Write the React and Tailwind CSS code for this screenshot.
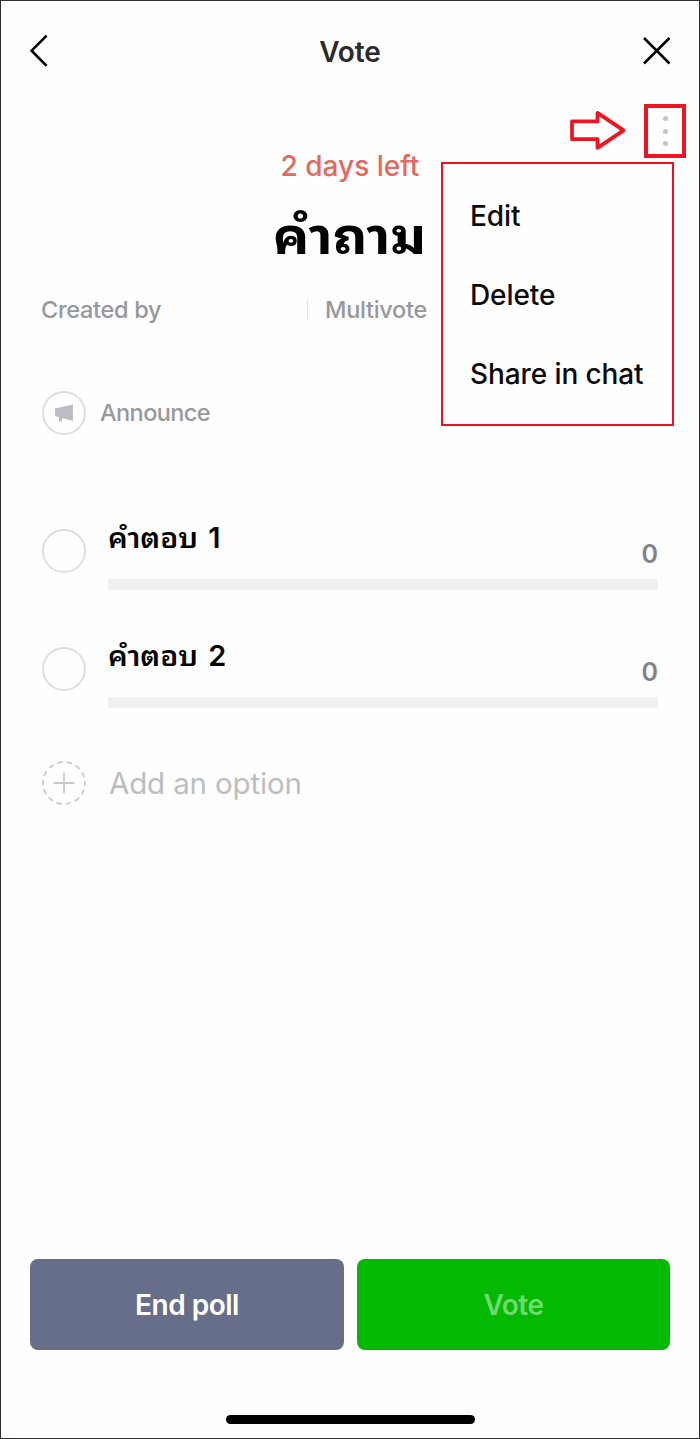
const options = [
  { label: "คำตอบ", number: 1, votes: 0 },
  { label: "คำตอบ", number: 2, votes: 0 },
];

const menuItems = ["Edit", "Delete", "Share in chat"];

function Header() {
  return (
    <header className="flex h-[100px] shrink-0 items-center justify-between px-[27px]">
      <button aria-label="Back" className="flex w-8">
        <svg width="24" height="36" viewBox="0 0 24 36" fill="none" stroke="#000" strokeWidth="2.6">
          <path d="M18.6 2.6 3.6 17.7 18.6 32.8" />
        </svg>
      </button>
      <h1 className="pt-px text-[28px] font-semibold leading-8 tracking-[-0.1px] text-[#2b2b2d]">Vote</h1>
      <button aria-label="Close" className="flex w-8 justify-end">
        <svg width="30" height="30" viewBox="0 0 30 30" fill="none" stroke="#000" strokeWidth="2.5">
          <path d="M2 2 27.5 27.5M27.5 2 2 27.5" />
        </svg>
      </button>
    </header>
  );
}

function ActionMenu() {
  return (
    <>
      <div className="absolute right-[13px] top-[103px] flex items-center gap-[17px]">
        <svg width="58" height="42" viewBox="0 0 58 42" fill="none" stroke="#ed1620" strokeWidth="3.8" strokeLinejoin="round">
          <path d="M3 11.4H28.5V2.8L54.6 20.3 28.5 37.8V29.2H3Z" />
        </svg>
        <button aria-label="More" className="flex h-[54px] w-[42px] flex-col items-center justify-center gap-[7.4px] border-4 border-[#ed1620]">
          <span className="size-[5px] rounded-full bg-[#c4c4c8]" />
          <span className="size-[5px] rounded-full bg-[#c4c4c8]" />
          <span className="size-[5px] rounded-full bg-[#c4c4c8]" />
        </button>
      </div>
      <ul className="absolute left-[440px] top-[161px] flex h-[264px] w-[233px] flex-col gap-[39px] border-2 border-[#ed1020] bg-[#fefefe] pl-[27px] pt-[32px] text-[28px] font-medium leading-10 tracking-[-0.1px] text-[#0a0a0a]">
        {menuItems.map((item) => (
          <li key={item} className="whitespace-nowrap">{item}</li>
        ))}
      </ul>
    </>
  );
}

function Option({ option }) {
  return (
    <li className="flex h-[118px]">
      <span className="mt-[11px] size-11 shrink-0 rounded-full border-2 border-[#dededf]" />
      <div className="ml-[22px] w-[550px]">
        <div className="flex h-[61px] justify-between">
          <p className="-mt-0.5 flex h-10 items-baseline gap-[16px] text-[29px] font-semibold leading-10 text-[#050505]">
            <span className="origin-left scale-x-[1.07] font-['Noto_Sans_Thai_Looped','Noto_Looped_Thai','Loma','Garuda','Waree',serif] text-[28px] font-semibold">
              {option.label}
            </span>
            <span>{option.number}</span>
          </p>
          <span className="mt-4 text-[25px] font-semibold leading-10 text-[#7d828c]">{option.votes}</span>
        </div>
        <div className="h-[11px] bg-[#f0f0f0]" />
      </div>
    </li>
  );
}

export default function App() {
  return (
    <main className="relative flex h-[1439px] w-[700px] flex-col overflow-hidden border border-[#302c2f] bg-[#fefefe] font-['Inter','Noto_Sans_Thai',sans-serif]">
      <Header />
      <section className="flex flex-col items-center pt-[47px]">
        <p className="text-[28px] font-medium leading-9 text-[#e2695f]">2 days left</p>
        <h2 className="mt-[18px] h-[64px] scale-x-[1.09] font-['Noto_Sans_Thai_Looped','Noto_Looped_Thai','Loma','Garuda','Waree',serif] text-[50px] font-bold leading-[60px] text-black">คำถาม</h2>
      </section>
      <div className="mt-[28px] flex h-8 items-center pl-10 text-[23.5px] font-medium leading-8 tracking-[-0.3px] text-[#97979e]">
        <span className="w-[266px]">Created by</span>
        <span className="h-5 w-px bg-[#e2e2e4]" />
        <span className="ml-[17px]">Multivote</span>
      </div>
      <div className="mt-[65px] flex h-11 items-center pl-[41px]">
        <span className="flex size-11 items-center justify-center rounded-full border-2 border-[#dededf]">
          <svg width="20" height="20" viewBox="0 0 20 20" fill="#bdbdc3">
            <path d="M1 5.6 19 1.4V18L8 15V18.5H5V14L1 13.2Z" />
          </svg>
        </span>
        <span className="ml-[14px] text-[23.5px] font-medium leading-8 tracking-[-0.6px] text-[#97979e]">Announce</span>
      </div>
      <ul className="mt-[83px] pl-[41px]">
        {options.map((option) => (
          <Option key={option.number} option={option} />
        ))}
      </ul>
      <button className="mt-[7px] flex h-11 items-center pl-[41px] text-left">
        <svg width="44" height="44" viewBox="0 0 44 44" fill="none" stroke="#cbcbce" strokeWidth="1.8">
          <circle cx="22" cy="22" r="21" strokeDasharray="5.5 3.925" strokeDashoffset="2.7" />
          <path d="M11.5 22H32.5M22 11.5V32.5" />
        </svg>
        <span className="ml-[23px] text-[29.5px] leading-10 tracking-[-0.15px] text-[#bdbdc1]">Add an option</span>
      </button>
      <footer className="mt-auto flex flex-col items-center pb-[14px]">
        <div className="flex gap-[13px]">
          <button className="h-[91px] w-[314px] rounded-lg bg-[#676e89] text-[28px] font-semibold tracking-[-0.5px] text-white">End poll</button>
          <button className="h-[91px] w-[313px] rounded-lg bg-[#03b903] text-[28px] font-semibold tracking-[-0.5px] text-[#70d970]">Vote</button>
        </div>
        <div className="mt-[65px] h-[9px] w-[249px] rounded-full bg-black" />
      </footer>
      <ActionMenu />
    </main>
  );
}
